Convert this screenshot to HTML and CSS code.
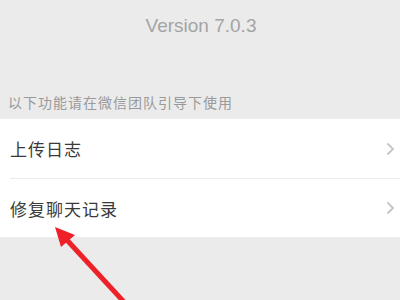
FILE: index.html
```html
<!DOCTYPE html>
<html>
<head>
<meta charset="utf-8">
<link rel="stylesheet" href="styles.css">
</head>
<body>
<div class="page">
  <div class="version">Version 7.0.3</div>
  <div class="caption">以下功能请在微信团队引导下使用</div>
  <div class="list">
    <div class="row">
      <span class="label">上传日志</span>
      <svg class="chev" width="9" height="14" viewBox="0 0 9 14"><path d="M1.5 1.5 L7 7 L1.5 12.5" fill="none" stroke="#c4c4c4" stroke-width="1.8"/></svg>
    </div>
    <div class="row">
      <span class="label">修复聊天记录</span>
      <svg class="chev" width="9" height="14" viewBox="0 0 9 14"><path d="M1.5 1.5 L7 7 L1.5 12.5" fill="none" stroke="#c4c4c4" stroke-width="1.8"/></svg>
    </div>
  </div>
  <svg class="arrow" width="400" height="300" viewBox="0 0 400 300">
    <line x1="66" y1="239" x2="124" y2="302" stroke="#ee2129" stroke-width="5"/>
    <polygon points="55,227 75,235 61,247" fill="#ee2129"/>
  </svg>
</div>
</body>
</html>
```
FILE: styles.css
```css
html, body {
  margin: 0;
  padding: 0;
  background: #ebebeb;
}
.page {
  position: relative;
  width: 400px;
  height: 300px;
  overflow: hidden;
  background: #ebebeb;
  font-family: "Noto Sans CJK SC", "Liberation Sans", sans-serif;
}
.version {
  font-family: "Liberation Sans", Arial, sans-serif;
  font-size: 19px;
  color: #a4a4a4;
  text-align: center;
  padding-top: 14px;
  height: 74px;
  line-height: 24px;
  box-sizing: border-box;
  padding-left: 2px;
}
.caption {
  font-size: 14px;
  letter-spacing: 1px;
  color: #9a9a9a;
  padding-left: 8px;
  height: 45px;
  line-height: 20px;
  padding-top: 18px;
  box-sizing: border-box;
}
.list {
  background: #ffffff;
  display: flex;
  flex-direction: column;
}
.row {
  height: 59px;
  display: flex;
  align-items: center;
  justify-content: space-between;
  padding: 0 5px 0 10px;
  box-sizing: border-box;
}
.row + .row {
  border-top: 1px solid #ececec;
  margin-left: 10px;
  padding-left: 0;
}
.label {
  font-size: 17px;
  letter-spacing: 1px;
  color: #3a3a3a;
}
.arrow {
  position: absolute;
  left: 0;
  top: 0;
}
```
